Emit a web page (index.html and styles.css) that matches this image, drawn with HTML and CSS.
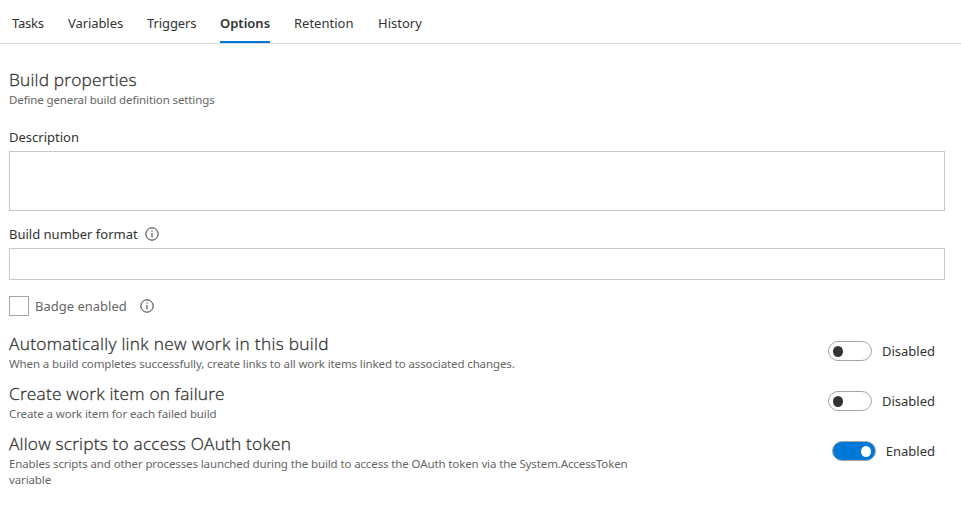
FILE: index.html
```
<!DOCTYPE html>
<html lang="en">
<head>
<meta charset="utf-8">
<title>Build options</title>
<link rel="stylesheet" href="styles.css">
</head>
<body>
<nav class="tabs">
  <a class="tab tab-tasks">Tasks</a>
  <a class="tab tab-variables">Variables</a>
  <a class="tab tab-triggers">Triggers</a>
  <a class="tab tab-options active">Options</a>
  <a class="tab tab-retention">Retention</a>
  <a class="tab tab-history">History</a>
</nav>
<main class="content">
  <h2 class="title">Build properties</h2>
  <p class="hint">Define general build definition settings</p>

  <div class="field-label description-label">Description</div>
  <div class="input textarea"></div>

  <div class="field-label number-label">Build number format
    <svg class="info" viewBox="0 0 14 14"><circle cx="7" cy="7" r="6.2"/><path d="M7 6v4.4M7 3.5v1.2"/></svg>
  </div>
  <div class="input"></div>

  <div class="check-row">
    <span class="checkbox"></span>
    <span class="check-text">Badge enabled</span>
    <svg class="info" viewBox="0 0 14 14"><circle cx="7" cy="7" r="6.2"/><path d="M7 6v4.4M7 3.5v1.2"/></svg>
  </div>

  <section class="option">
    <div class="option-text">
      <h2 class="title title-wide">Automatically link new work in this build</h2>
      <p class="hint">When a build completes successfully, create links to all work items linked to associated changes.</p>
    </div>
    <div class="switch"><span class="toggle"><span class="knob"></span></span><span>Disabled</span></div>
  </section>
  <section class="option">
    <div class="option-text">
      <h2 class="title">Create work item on failure</h2>
      <p class="hint">Create a work item for each failed build</p>
    </div>
    <div class="switch"><span class="toggle"><span class="knob"></span></span><span>Disabled</span></div>
  </section>
  <section class="option">
    <div class="option-text">
      <h2 class="title">Allow scripts to access OAuth token</h2>
      <p class="hint">Enables scripts and other processes launched during the build to access the OAuth token via the System.AccessToken variable</p>
    </div>
    <div class="switch"><span class="toggle on"><span class="knob"></span></span><span>Enabled</span></div>
  </section>
</main>
</body>
</html>
```
FILE: styles.css
```
* { box-sizing: border-box; }
body {
  margin: 0;
  background: #fff;
  color: #333;
  font: 13px/20px "Noto Sans", "Open Sans", sans-serif;
}
.tabs {
  display: flex;
  gap: 24px;
  height: 44px;
  padding-left: 12px;
  border-bottom: 1px solid #dadada;
}
.tab {
  height: 43px;
  padding-top: 13px;
  white-space: nowrap;
}
.tab-tasks { width: 32px; letter-spacing: -0.2px; }
.tab-variables { width: 55px; letter-spacing: -0.08px; }
.tab-triggers { width: 49px; letter-spacing: -0.1px; }
.tab-options { width: 50px; }
.tab-retention { width: 60px; }
.active {
  font-weight: 600;
  border-bottom: 2px solid #0078d7;
}
.content { padding: 23px 16px 0 9px; }
.title {
  margin: 0;
  font-family: "Open Sans", "Noto Sans", sans-serif;
  font-size: 17.3px;
  font-weight: 300;
  line-height: 25px;
  letter-spacing: 0.2px;
  -webkit-text-stroke: 0.3px #333;
}
.title-wide { letter-spacing: 0.3px; }
.hint {
  margin: 0;
  color: #666;
  font-size: 11.5px;
  line-height: 16px;
  letter-spacing: -0.12px;
}
.field-label {
  display: flex;
  align-items: center;
  gap: 7px;
  height: 20px;
}
.description-label { margin: 19px 0 4px; }
.number-label { margin: 13px 0 4px; }
.input {
  height: 32px;
  border: 1px solid #c8c8c8;
}
.textarea { height: 60px; }
.info {
  width: 14px;
  height: 14px;
  fill: none;
  stroke: #333;
  stroke-width: 1;
}
.check-row {
  display: flex;
  align-items: center;
  height: 20px;
  margin: 16px 0 15px;
  color: #666;
}
.checkbox {
  width: 20px;
  height: 20px;
  margin-right: 6px;
  border: 1px solid #a6a6a6;
}
.check-text { margin-right: 13px; }
.option {
  display: flex;
  justify-content: space-between;
  align-items: flex-start;
  margin-bottom: 9px;
}
.option-text { max-width: 640px; }
.switch {
  display: flex;
  align-items: center;
  gap: 10px;
  margin: 10px 10px 0 0;
}
.toggle {
  display: flex;
  align-items: center;
  width: 44px;
  height: 20px;
  padding: 0 4px;
  border: 1px solid #a6a6a6;
  border-radius: 10px;
}
.knob {
  width: 10px;
  height: 11px;
  border-radius: 50%;
  background: #333;
}
.on {
  justify-content: flex-end;
  background: #0078d7;
}
.on .knob { background: #fff; }
```
